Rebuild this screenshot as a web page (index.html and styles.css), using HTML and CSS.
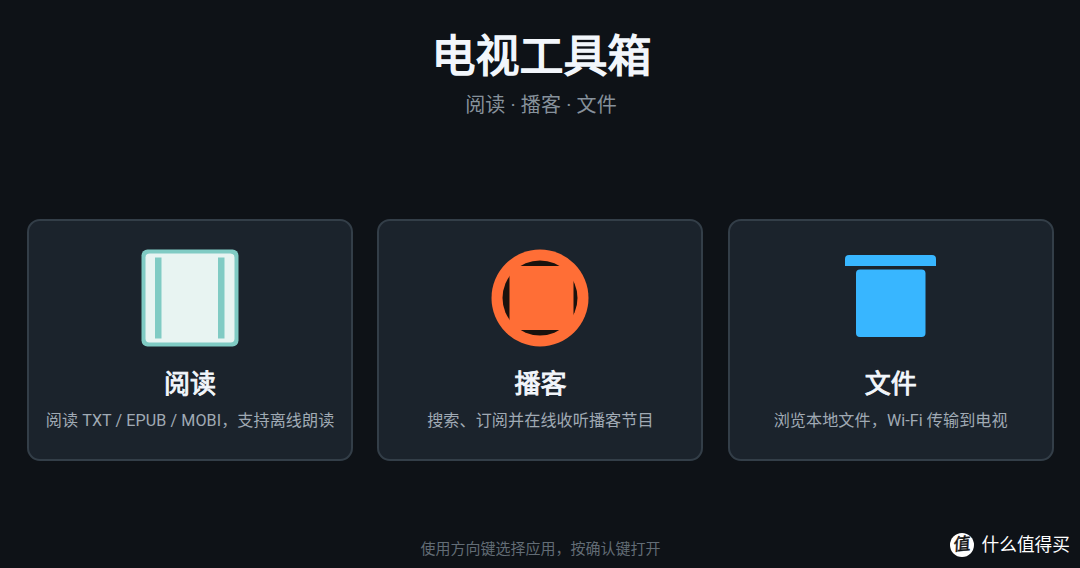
FILE: index.html
```
<!DOCTYPE html>
<html lang="zh-CN">
<head>
  <meta charset="UTF-8" />
  <title>电视工具箱</title>
  <link rel="stylesheet" href="styles.css">
</head>
<body>

  <header class="header">
    <h1>电视工具箱</h1>
    <p>阅读 · 播客 · 文件</p>
  </header>

  <main class="cards">
    <section class="card">
      <svg class="icon" viewBox="0 0 98 98">
        <rect x="0.5" y="0.5" width="97" height="97" rx="6" fill="#80cbc4" />
        <rect x="4.5" y="4.5" width="89" height="89" rx="4" fill="#e8f4f2" />
        <rect x="14" y="8.5" width="6.5" height="81" fill="#80cbc4" />
        <rect x="77" y="8.5" width="6.5" height="81" fill="#80cbc4" />
      </svg>
      <h2>阅读</h2>
      <p>阅读 TXT / EPUB / MOBI，支持离线朗读</p>
    </section>

    <section class="card">
      <svg class="icon" viewBox="0 0 98 98">
        <circle cx="49" cy="49" r="48.5" fill="#ff6e36" />
        <circle cx="49" cy="49" r="37.5" fill="#1a120d" />
        <rect x="18.5" y="17" width="64" height="64" fill="#ff6e36" />
      </svg>
      <h2>播客</h2>
      <p>搜索、订阅并在线收听播客节目</p>
    </section>

    <section class="card">
      <svg class="icon" viewBox="0 0 98 98">
        <path d="M3 17V10a4 4 0 0 1 4-4h83a4 4 0 0 1 4 4v7z" fill="#38b6ff" />
        <rect x="14" y="20.5" width="69.5" height="67.5" rx="4" fill="#38b6ff" />
      </svg>
      <h2>文件</h2>
      <p>浏览本地文件，Wi-Fi 传输到电视</p>
    </section>
  </main>

  <footer class="hint">使用方向键选择应用，按确认键打开</footer>

  <div class="watermark">
    <span class="badge"><span>值</span></span>
    <span>什么值得买</span>
  </div>

</body>
</html>
```
FILE: styles.css
```
* {
  box-sizing: border-box;
  margin: 0;
  padding: 0;
}
body {
  position: relative;
  height: 568px;
  overflow: hidden;
  background: #0e1217;
  color: #f2f6fb;
  font-family: Roboto, "Noto Sans CJK SC", sans-serif;
  text-align: center;
}
.header {
  height: 219px;
  padding: 25px 0 0 3px;
}
.header h1 {
  font-size: 44px;
  font-weight: 400;
  line-height: 64px;
  -webkit-text-stroke: 1.5px #f2f6fb;
}
.header p {
  margin-top: 1px;
  padding-right: 1px;
  color: #86919b;
  font-size: 20px;
  letter-spacing: 0.12px;
  line-height: 30px;
}
.cards {
  display: grid;
  grid-template-columns: repeat(3, 326px);
  gap: 24.3px;
  padding-left: 27.1px;
}
.card {
  height: 242px;
  padding-top: 28px;
  background: #1b232c;
  border: 2px solid #333e48;
  border-radius: 13px;
}
.icon {
  display: block;
  width: 98px;
  height: 98px;
  margin: 0 auto;
}
.card h2 {
  margin-top: 18px;
  font-size: 26px;
  font-weight: 400;
  line-height: 38px;
  -webkit-text-stroke: 0.9px #f2f6fb;
}
.card p {
  margin-top: 6px;
  color: #a0aab4;
  font-size: 16.1px;
  letter-spacing: 0.08px;
  line-height: 24px;
  white-space: nowrap;
}
.hint {
  margin-top: 77px;
  padding-left: 1px;
  color: #626c75;
  font-size: 15px;
  line-height: 22px;
}
.watermark {
  position: absolute;
  right: 10px;
  bottom: 10px;
  display: flex;
  align-items: center;
  gap: 8px;
  color: #fff;
  font-size: 17.7px;
  line-height: 26px;
}
.badge {
  width: 24px;
  height: 24px;
  border-radius: 50%;
  background: #fff;
  color: #111;
  font-size: 17px;
  line-height: 23px;
  -webkit-text-stroke: 0.5px #111;
}
.badge span {
  display: block;
  transform: rotate(-5deg) skewX(-8deg);
}
```
